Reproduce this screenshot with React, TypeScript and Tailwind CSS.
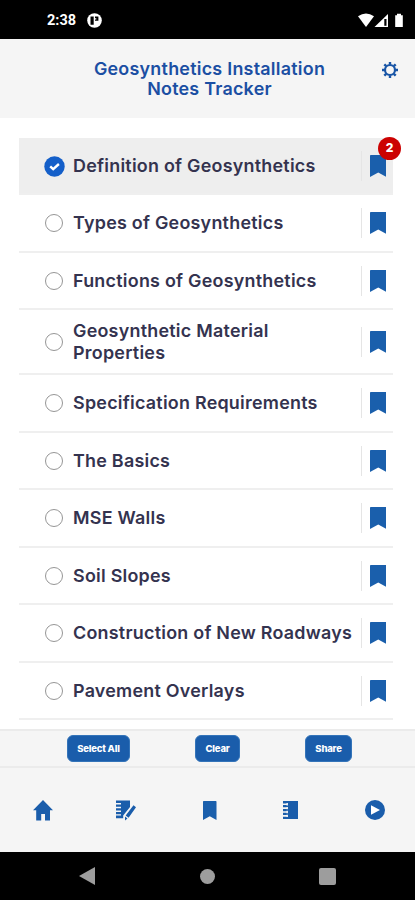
const items = [
  'Definition of Geosynthetics',
  'Types of Geosynthetics',
  'Functions of Geosynthetics',
  'Geosynthetic Material Properties',
  'Specification Requirements',
  'The Basics',
  'MSE Walls',
  'Soil Slopes',
  'Construction of New Roadways',
  'Pavement Overlays',
];

function StatusBar() {
  return (
    <div className="flex h-[39px] shrink-0 items-center bg-black pl-[47px] pr-[11px] text-white">
      <span className="mt-[3px] w-[39.5px] font-['Roboto'] text-[14.5px] font-bold leading-none">2:38</span>
      <svg className="mt-[2px] h-[15px] w-[15px]" viewBox="0 0 15 15">
        <circle cx="7.5" cy="7.5" r="7.3" fill="#fff" />
        <path d="M3.5 3.5h3.2v8.2H3.5zM8 3.5h3.4v4.2H8z" fill="#000" />
        <path d="M8 5.2h1.3v1.2H8z" fill="#fff" />
      </svg>
      <svg className="ml-auto mt-[2px] h-[15px] w-[46px]" viewBox="0 0 46 15">
        <path d="M0 3.2Q8 -2.2 16 3.2L8 14Z" fill="#fff" />
        <path d="M16.5 14L30 1V14Z" fill="#fff" />
        <path d="M26.3 6h2.2v6.8h-2.2z" fill="#000" />
        <path d="M37.2 2.3H39V.8h4v1.5h1.8V14h-7.6Z" fill="#fff" />
      </svg>
    </div>
  );
}

function Gear() {
  return (
    <svg className="h-4 w-4" viewBox="0 0 16 16" fill="none" stroke="#1855a6">
      <circle cx="8" cy="8" r="5" strokeWidth="2.2" />
      <path
        d="M8 0v2.6M8 13.4V16M0 8h2.6M13.4 8H16M2.3 2.3l1.9 1.9M11.8 11.8l1.9 1.9M2.3 13.7l1.9-1.9M11.8 4.2l1.9-1.9"
        strokeWidth="2.4"
      />
    </svg>
  );
}

function Bookmark({ className }: { className: string }) {
  return (
    <svg className={className} viewBox="0 0 16 22" preserveAspectRatio="none">
      <path d="M.8 0H15.2Q16 0 16 .8V22L8 17.6L0 22V.8Q0 0 .8 0Z" fill="#1a5fac" />
    </svg>
  );
}

function Row({ label, index }: { label: string; index: number }) {
  const checked = index === 0;
  const tall = index === 3;
  return (
    <li
      className={`flex shrink-0 items-center border-b-2 border-[#efefef] pl-[25px] ${tall ? 'h-[65px]' : 'h-[57.5px]'} ${checked ? 'bg-[#eeeeee]' : ''}`}
    >
      <span className="flex w-[29.5px] shrink-0">
        {checked ? (
          <svg className="mt-[3px] h-[21px] w-[21px]" viewBox="0 0 21 21">
            <circle cx="10.5" cy="10.5" r="10.2" fill="#145fc9" />
            <path d="M6.2 10.3l3 2.9 5.7-5.2" fill="none" stroke="#fff" strokeWidth="2.4" />
          </svg>
        ) : (
          <span className="ml-[1.5px] mt-px h-[18px] w-[18px] rounded-full border-[1.2px] border-[#969696] bg-white" />
        )}
      </span>
      <span className="w-[288px] shrink-0 whitespace-nowrap text-[17.9px] font-semibold leading-[21.5px] tracking-[0.25px] text-[#34334f]">
        {tall ? (
          <>
            Geosynthetic Material
            <br />
            Properties
          </>
        ) : (
          label
        )}
      </span>
      <span className="relative mt-px flex h-[30px] items-center border-l-[1.5px] border-[#e5e5e5] pl-[7.5px]">
        <Bookmark className="h-[22px] w-[16.5px]" />
        {checked && (
          <span className="absolute -top-[14px] left-[16px] flex h-[23px] w-[23px] items-center justify-center rounded-full bg-[#cc0202] text-[12px] font-extrabold text-white">
            2
          </span>
        )}
      </span>
    </li>
  );
}

function Action({ label, className }: { label: string; className: string }) {
  return (
    <button
      className={`h-[27px] rounded-[6px] border border-[#3474b9] bg-[#1a5dab] text-[9.5px] font-extrabold leading-none tracking-[-0.2px] text-white ${className}`}
    >
      {label}
    </button>
  );
}

export default function App() {
  return (
    <div className="flex h-[900px] w-[415px] flex-col overflow-hidden bg-white font-['Inter',sans-serif] [font-optical-sizing:none]">
      <StatusBar />
      <header className="flex h-[79px] shrink-0 items-start bg-[#f5f5f5] pl-[83px] pr-[17px] pt-[20px]">
        <h1 className="w-[253px] whitespace-nowrap text-center text-[17.9px] font-semibold leading-5 tracking-[0.25px] text-[#1b4fa3]">
          Geosynthetics Installation
          <br />
          Notes Tracker
        </h1>
        <span className="ml-auto mt-[3px]">
          <Gear />
        </span>
      </header>
      <ul className="flex min-h-0 flex-1 flex-col pl-[18.5px] pr-[22.5px] pt-[19.5px]">
        {items.map((label, i) => (
          <Row key={label} label={label} index={i} />
        ))}
      </ul>
      <div className="flex h-[39px] shrink-0 items-center border-y-2 border-[#ebebeb] bg-[#f5f5f5] pl-[67px] pt-px">
        <Action label="Select All" className="w-[63px]" />
        <Action label="Clear" className="ml-[65px] w-[45px]" />
        <Action label="Share" className="ml-[65px] w-[47px]" />
      </div>
      <nav className="flex h-[84.5px] shrink-0 items-center bg-[#f5f5f5] pl-[33px] pt-px">
        <svg className="h-[21px] w-5" viewBox="0 0 20 21">
          <path d="M10 0L20 10.2H17V20.5H12V14H8.2V20.5H3.2V10.2H0Z" fill="#1a5dab" />
        </svg>
        <svg className="ml-[63px] h-[21px] w-5" viewBox="0 0 20 21">
          <path d="M0 .5H14V7L7.2 15.5V18.2H0Z" fill="#1a5dab" />
          <path d="M0 3.8h5M0 7.5h5M0 11.2h5M0 14.9h5" stroke="#f5f5f5" strokeWidth="1.4" />
          <path d="M17.5 5.3l2.5 1.9-7.4 10.5-2.9-2.1ZM9 16.6l2.5 1.9-2.5 2Z" fill="#1a5dab" />
        </svg>
        <Bookmark className="ml-[67px] h-[19px] w-[13.5px]" />
        <svg className="ml-[66.5px] h-[18px] w-[15px]" viewBox="0 0 15 18">
          <path d="M0 0H15V18H0Z" fill="#1a5dab" />
          <path d="M0 3.2h4.5M0 7.1h4.5M0 11h4.5M0 14.9h4.5" stroke="#f5f5f5" strokeWidth="1.6" />
          <path d="M4.2 2v2.4M4.2 5.9v2.4M4.2 9.8v2.4M4.2 13.7v2.4" stroke="#f5f5f5" strokeWidth="1.4" />
        </svg>
        <svg className="ml-[66.5px] h-5 w-5" viewBox="0 0 20 20">
          <circle cx="10" cy="10" r="10" fill="#1a5dab" />
          <path d="M6 5.3L15 10L6 14.7Z" fill="#fff" />
        </svg>
      </nav>
      <footer className="flex h-[48px] shrink-0 items-center bg-black pl-[79px]">
        <svg className="h-[18px] w-4" viewBox="0 0 16 18">
          <path d="M16 0V18L0 9Z" fill="#9d9d9d" />
        </svg>
        <span className="ml-[105px] h-[15px] w-[15px] rounded-full bg-[#9d9d9d]" />
        <span className="ml-[104px] h-[17px] w-[17px] rounded-[2px] bg-[#9d9d9d]" />
      </footer>
    </div>
  );
}
